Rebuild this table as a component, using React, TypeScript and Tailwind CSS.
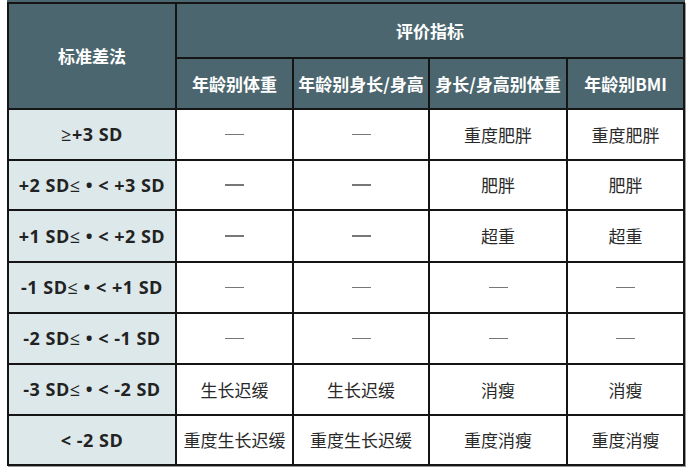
const rows: [string, string, string, string, string][] = [
  ['≥+3 SD', '—', '—', '重度肥胖', '重度肥胖'],
  ['+2 SD≤ • < +3 SD', '—', '—', '肥胖', '肥胖'],
  ['+1 SD≤ • < +2 SD', '—', '—', '超重', '超重'],
  ['-1 SD≤ • < +1 SD', '—', '—', '—', '—'],
  ['-2 SD≤ • < -1 SD', '—', '—', '—', '—'],
  ['-3 SD≤ • < -2 SD', '生长迟缓', '生长迟缓', '消瘦', '消瘦'],
  ['< -2 SD', '重度生长迟缓', '重度生长迟缓', '重度消瘦', '重度消瘦'],
]

const subHeaders = ['年龄别体重', '年龄别身长/身高', '身长/身高别体重', '年龄别BMI']

// ≤ / ≥ are lighter than the rest of the label in the original
function SdLabel({ text }: { text: string }) {
  const parts = text.split(/([≤≥])/)
  return (
    <>
      {parts.map((p, i) =>
        p === '≤' || p === '≥' ? (
          <span key={i} className="font-normal">
            {p}
          </span>
        ) : (
          <span key={i}>{p}</span>
        )
      )}
    </>
  )
}

function Cell({ text }: { text: string }) {
  if (text === '—') {
    return (
      <div className="flex items-center justify-center bg-white">
        <span className="block h-[1.5px] w-[19px] bg-[#777]" />
      </div>
    )
  }
  return (
    <div className="flex items-center justify-center bg-white text-[17px] text-[#2a2a2a]">
      {text}
    </div>
  )
}

export default function App() {
  return (
    <div
      className="h-[474px] w-[691px] bg-white pl-[7px]"
      style={{ fontFamily: '"Noto Sans CJK SC", sans-serif' }}
    >
      <div className="h-[2px] w-[678px] bg-[#4b666e]" />
      <div className="grid w-[678px] grid-cols-[166px_115px_134px_136px_115px] grid-rows-[53px_49px_49px_48px_50px_49px_49px_49px_48px] gap-[2px] bg-[#151515] p-[2px] shadow-[1px_1px_0_#999]">
        <div className="row-span-2 flex items-center justify-center bg-[#4b666e] text-[17px] font-bold text-white">
          标准差法
        </div>
        <div className="col-span-4 flex items-center justify-center bg-[#4b666e] text-[17px] font-bold text-white">
          评价指标
        </div>
        {subHeaders.map((h) => (
          <div
            key={h}
            className="flex items-center justify-center whitespace-nowrap bg-[#4b666e] text-[17px] font-bold text-white"
          >
            {h}
          </div>
        ))}
        {rows.map((r) => (
          <>
            <div
              key={r[0]}
              className="flex items-center justify-center whitespace-pre bg-[#dde8ea] text-[18px] font-bold tracking-[0.5px] text-[#222]"
              style={{ fontFamily: '"Open Sans", "Noto Sans CJK SC", sans-serif' }}
            >
              <SdLabel text={r[0]} />
            </div>
            {r.slice(1).map((c, i) => (
              <Cell key={r[0] + i} text={c} />
            ))}
          </>
        ))}
      </div>
    </div>
  )
}
